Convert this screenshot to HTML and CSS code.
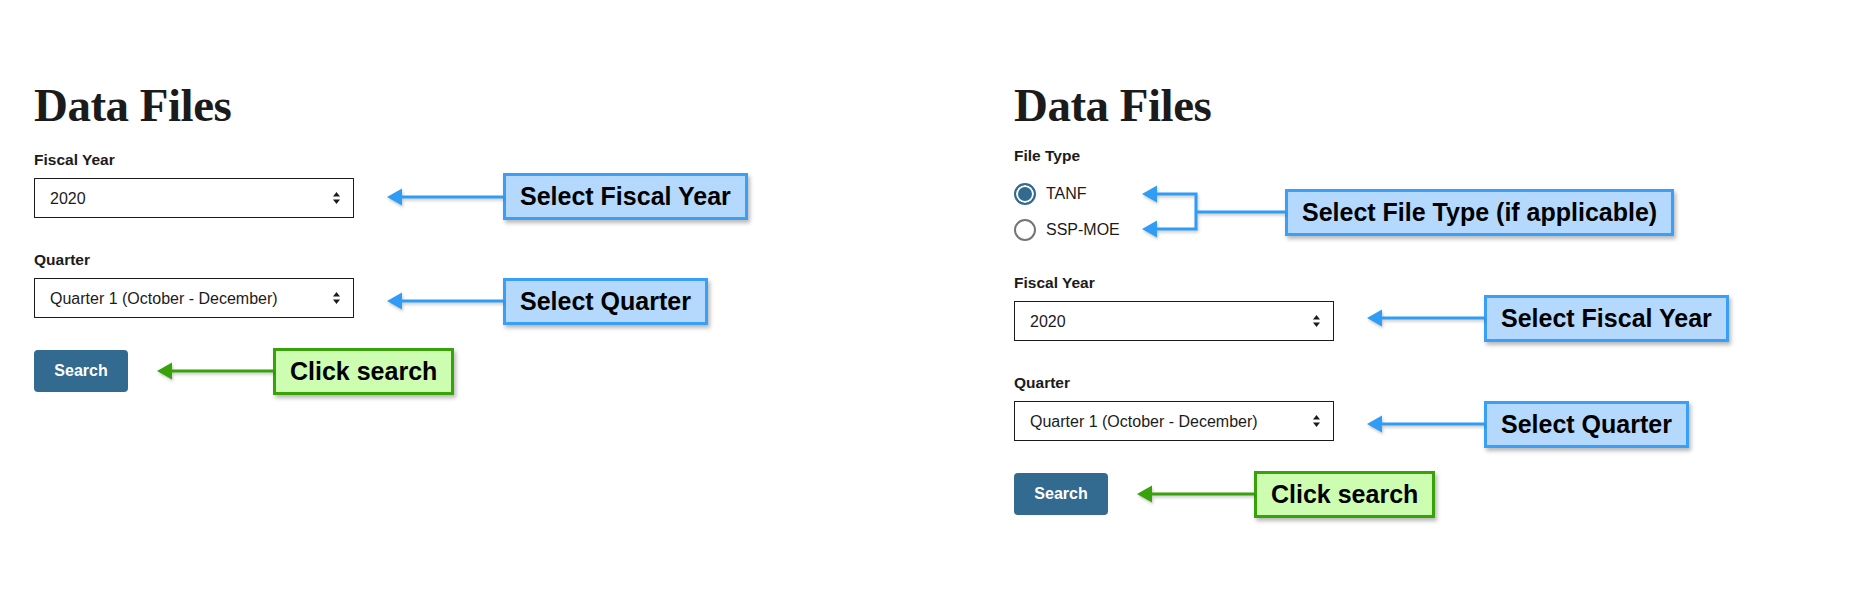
FILE: index.html
```html
<!DOCTYPE html>
<html lang="en">
<head>
<meta charset="utf-8">
<title>Data Files</title>
<link rel="stylesheet" href="styles.css">
</head>
<body>
<main class="page">
  <section class="panel panel--left">
    <h1 class="title">Data Files</h1>

    <div class="field">
      <label class="field-label" for="fy1">Fiscal Year</label>
      <div class="control-row">
        <div class="select-wrap">
          <select class="select" id="fy1"><option>2020</option></select>
          <svg class="select-icon" viewBox="0 0 7 12" aria-hidden="true"><polygon points="3.5,0 7,4.6 0,4.6"/><polygon points="0,7.4 7,7.4 3.5,12"/></svg>
        </div>
        <div class="note note--up-slight">
          <svg class="arrow arrow--blue" width="116" height="20" viewBox="0 0 116 20" aria-hidden="true"><line x1="12" y1="10" x2="116" y2="10"/><polygon points="0,10 15,1.5 15,18.5"/></svg>
          <div class="callout callout--blue">Select Fiscal Year</div>
        </div>
      </div>
    </div>

    <div class="field">
      <label class="field-label" for="q1">Quarter</label>
      <div class="control-row">
        <div class="select-wrap">
          <select class="select" id="q1"><option>Quarter 1 (October - December)</option></select>
          <svg class="select-icon" viewBox="0 0 7 12" aria-hidden="true"><polygon points="3.5,0 7,4.6 0,4.6"/><polygon points="0,7.4 7,7.4 3.5,12"/></svg>
        </div>
        <div class="note note--down">
          <svg class="arrow arrow--blue" width="116" height="20" viewBox="0 0 116 20" aria-hidden="true"><line x1="12" y1="10" x2="116" y2="10"/><polygon points="0,10 15,1.5 15,18.5"/></svg>
          <div class="callout callout--blue">Select Quarter</div>
        </div>
      </div>
    </div>

    <div class="actions">
      <button class="btn" type="button">Search</button>
      <div class="note note--search">
        <svg class="arrow arrow--green" width="116" height="20" viewBox="0 0 116 20" aria-hidden="true"><line x1="12" y1="10" x2="116" y2="10"/><polygon points="0,10 15,1.5 15,18.5"/></svg>
        <div class="callout callout--green">Click search</div>
      </div>
    </div>
  </section>

  <section class="panel panel--right">
    <h1 class="title">Data Files</h1>

    <div class="field field--radios">
      <div class="field-label field-label--legend">File Type</div>
      <div class="radio-row">
        <div class="radio-list">
          <label class="radio"><span class="radio-dot radio-dot--checked"></span><span class="radio-text">TANF</span></label>
          <label class="radio"><span class="radio-dot"></span><span class="radio-text">SSP-MOE</span></label>
        </div>
        <svg class="arrow arrow--blue bracket" width="143" height="56" viewBox="0 0 143 56" aria-hidden="true">
          <polyline class="bracket-line" points="12,10 54,10 54,45 12,45"/>
          <line x1="54" y1="28" x2="143" y2="28"/>
          <polygon points="0,10 15,1.5 15,18.5"/>
          <polygon points="0,45 15,36.5 15,53.5"/>
        </svg>
        <div class="callout callout--blue">Select File Type (if applicable)</div>
      </div>
    </div>

    <div class="field">
      <label class="field-label" for="fy2">Fiscal Year</label>
      <div class="control-row">
        <div class="select-wrap">
          <select class="select" id="fy2"><option>2020</option></select>
          <svg class="select-icon" viewBox="0 0 7 12" aria-hidden="true"><polygon points="3.5,0 7,4.6 0,4.6"/><polygon points="0,7.4 7,7.4 3.5,12"/></svg>
        </div>
        <div class="note note--up">
          <svg class="arrow arrow--blue" width="117" height="20" viewBox="0 0 117 20" aria-hidden="true"><line x1="12" y1="10" x2="117" y2="10"/><polygon points="0,10 15,1.5 15,18.5"/></svg>
          <div class="callout callout--blue">Select Fiscal Year</div>
        </div>
      </div>
    </div>

    <div class="field">
      <label class="field-label" for="q2">Quarter</label>
      <div class="control-row">
        <div class="select-wrap">
          <select class="select" id="q2"><option>Quarter 1 (October - December)</option></select>
          <svg class="select-icon" viewBox="0 0 7 12" aria-hidden="true"><polygon points="3.5,0 7,4.6 0,4.6"/><polygon points="0,7.4 7,7.4 3.5,12"/></svg>
        </div>
        <div class="note note--down">
          <svg class="arrow arrow--blue" width="117" height="20" viewBox="0 0 117 20" aria-hidden="true"><line x1="12" y1="10" x2="117" y2="10"/><polygon points="0,10 15,1.5 15,18.5"/></svg>
          <div class="callout callout--blue">Select Quarter</div>
        </div>
      </div>
    </div>

    <div class="actions">
      <button class="btn" type="button">Search</button>
      <div class="note note--search">
        <svg class="arrow arrow--green" width="117" height="20" viewBox="0 0 117 20" aria-hidden="true"><line x1="12" y1="10" x2="117" y2="10"/><polygon points="0,10 15,1.5 15,18.5"/></svg>
        <div class="callout callout--green">Click search</div>
      </div>
    </div>
  </section>
</main>
</body>
</html>
```

FILE: styles.css
```css
html, body {
  margin: 0;
  padding: 0;
  background: #ffffff;
}

body {
  font-family: "Liberation Sans", Arial, Helvetica, sans-serif;
  color: #1b1b1b;
}

.page {
  display: flex;
  align-items: flex-start;
  padding: 82px 0 60px 34px;
}

.panel {
  display: flex;
  flex-direction: column;
  align-items: flex-start;
}

.panel--left {
  width: 980px;
}

.title {
  margin: 0;
  font-family: "Liberation Serif", "Times New Roman", serif;
  font-weight: 700;
  font-size: 47px;
  line-height: 47px;
  letter-spacing: -0.5px;
  color: #1b1b1b;
}

.field {
  margin-top: 32px;
  display: flex;
  flex-direction: column;
  align-items: flex-start;
}

.title + .field {
  margin-top: 21px;
}

.title + .field--radios {
  margin-top: 17px;
}

.field-label {
  display: block;
  margin: 0 0 8px;
  font-size: 15.5px;
  line-height: 20px;
  font-weight: 700;
  color: #1b1b1b;
}

.field-label--legend {
  margin-bottom: 17px;
}

.control-row {
  display: flex;
  align-items: center;
  height: 40px;
}

.select-wrap {
  position: relative;
  width: 320px;
  height: 40px;
  flex: none;
}

.select {
  -webkit-appearance: none;
  appearance: none;
  box-sizing: border-box;
  display: block;
  width: 100%;
  height: 100%;
  margin: 0;
  padding: 0 30px 0 15px;
  border: 1px solid #1b1b1b;
  border-radius: 0;
  background: #ffffff;
  font-family: "Liberation Sans", Arial, sans-serif;
  font-size: 16px;
  color: #1b1b1b;
}

.select-icon {
  position: absolute;
  right: 14px;
  top: 14px;
  width: 7px;
  height: 12px;
  fill: #1b1b1b;
  pointer-events: none;
}

/* annotations */
.note {
  display: flex;
  align-items: center;
  margin-left: 33px;
  flex: none;
}

.note--down {
  margin-top: 6px;
}

.note--up {
  margin-bottom: 6px;
}

.note--up-slight {
  margin-bottom: 3px;
}

.note--search {
  margin-left: 29px;
}

.arrow {
  display: block;
  flex: none;
  filter: drop-shadow(1px 2px 1.5px rgba(0, 0, 0, 0.22));
}

.arrow line,
.arrow polyline {
  stroke-width: 3px;
  fill: none;
}

.bracket-line {
  stroke-linejoin: miter;
}

.arrow--blue line,
.arrow--blue polyline {
  stroke: #2f9cf6;
}

.arrow--blue polygon {
  fill: #2f9cf6;
}

.arrow--green line {
  stroke: #38a20b;
}

.arrow--green polygon {
  fill: #38a20b;
}

.callout {
  box-sizing: border-box;
  height: 47px;
  display: flex;
  align-items: center;
  padding: 0 14px;
  border: 3px solid;
  font-family: "Liberation Sans", Arial, sans-serif;
  font-weight: 700;
  font-size: 25px;
  color: #000000;
  white-space: nowrap;
  box-shadow: 2px 3px 4px rgba(0, 0, 0, 0.28);
  flex: none;
}

.callout--blue {
  background: #b4d9fc;
  border-color: #3a9ff7;
}

.callout--green {
  background: #cdfdb1;
  border-color: #38a20b;
}

/* radios */
.radio-row {
  display: flex;
  align-items: center;
}

.radio-list {
  width: 128px;
  display: flex;
  flex-direction: column;
  gap: 14px;
  flex: none;
}

.radio {
  display: flex;
  align-items: center;
  height: 22px;
  gap: 10px;
}

.radio-dot {
  box-sizing: border-box;
  width: 22px;
  height: 22px;
  border-radius: 50%;
  border: 2px solid #757575;
  background: #ffffff;
  flex: none;
}

.radio-dot--checked {
  border-color: #336a90;
  background: #336a90;
  box-shadow: inset 0 0 0 2px #ffffff;
}

.radio-text {
  font-size: 16px;
  color: #1b1b1b;
}

/* button */
.actions {
  margin-top: 32px;
  display: flex;
  align-items: center;
  height: 42px;
}

.btn {
  box-sizing: border-box;
  width: 94px;
  height: 42px;
  margin: 0;
  padding: 0;
  border: 0;
  border-radius: 4px;
  background: #336a90;
  color: #ffffff;
  font-family: "Liberation Sans", Arial, sans-serif;
  font-weight: 700;
  font-size: 16px;
}
```
